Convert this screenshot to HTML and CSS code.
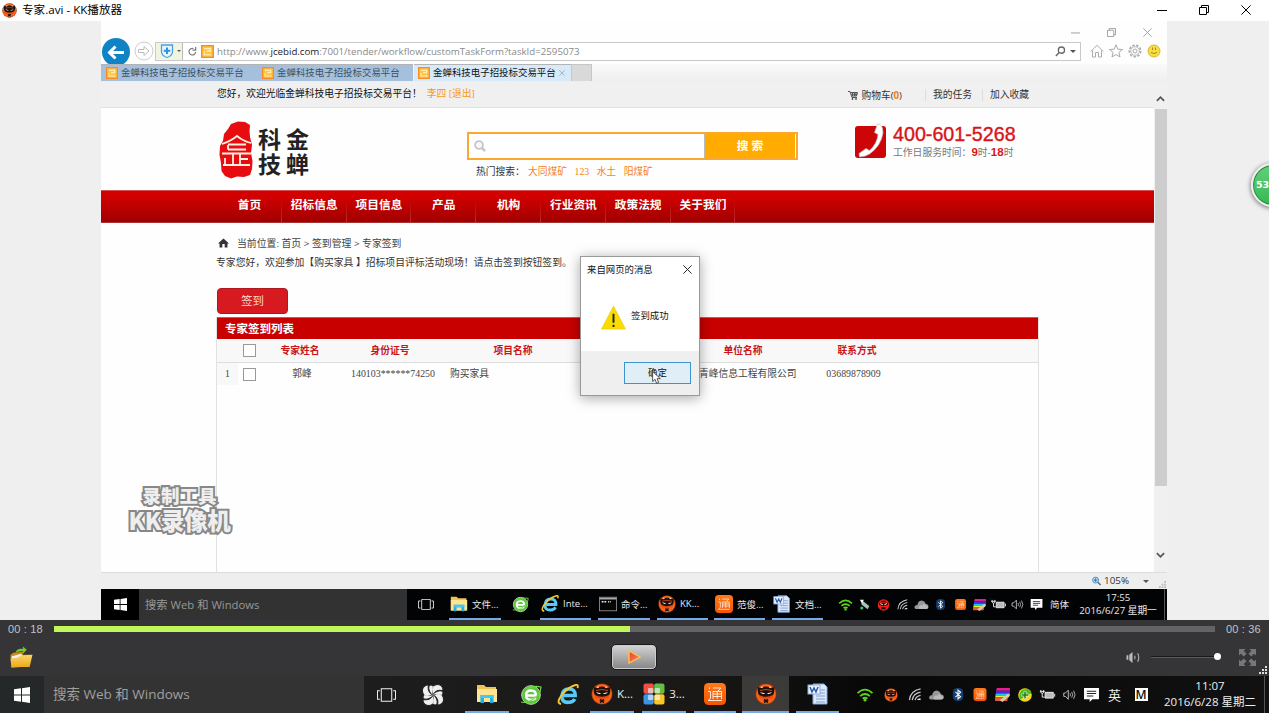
FILE: index.html
```html
<!DOCTYPE html>
<html>
<head>
<meta charset="utf-8">
<title>专家.avi - KK播放器</title>
<link rel="stylesheet" href="styles.css">
</head>
<body>
<svg class="defs" width="0" height="0" aria-hidden="true">
  <defs>
    <linearGradient id="gold" x1="0" y1="0" x2="0" y2="1"><stop offset="0" stop-color="#fbd66a"/><stop offset="1" stop-color="#eda91b"/></linearGradient>
    <radialGradient id="ember"><stop offset="0.55" stop-color="#e8470c"/><stop offset="0.85" stop-color="#ff6a1c"/><stop offset="1" stop-color="#8e2a08"/></radialGradient>
    <linearGradient id="orange" x1="0" y1="0" x2="0" y2="1"><stop offset="0" stop-color="#ff7a1a"/><stop offset="1" stop-color="#f85400"/></linearGradient>
    <linearGradient id="redplay" x1="0" y1="0" x2="1" y2="1"><stop offset="0" stop-color="#e8402c"/><stop offset="1" stop-color="#ff8a5c"/></linearGradient>
  </defs>
  <symbol id="kk" viewBox="0 0 22 22"><circle cx="11" cy="11" r="10.6" fill="url(#ember)"/><path d="M3 4L6 5Q11 2 16 5L19 4Q20 9 18 12Q11 15.500 4 12Q2 9 3 4Z" fill="#1c120e"/><path d="M5 9Q7.500 12 10 10.500ZM17 9Q14.500 12 12 10.500Z" fill="#fff"/><path d="M5 7.500Q11 5.500 17 7.500" stroke="#d84a14" fill="none" stroke-width=".9"/><path d="M6 4.500L8 4M16 4.500L14 4" stroke="#f4ded0" stroke-width="1.200"/><path d="M5 14.500Q11 17 17 14.500L15 18.500H7Z" fill="#f26322"/><path d="M9 16.500L13 19.500M13 16.500L9 19.500" stroke="#21100a" stroke-width="1.600"/></symbol>
  <symbol id="ninja" viewBox="0 0 22 22"><circle cx="11" cy="11" r="10.5" fill="#ee2218"/><path d="M3 7H19V11Q11 15 3 11ZM7 3h8v2H7zM7 15h8v4H7z" fill="#250706"/><path d="M5 8.500L9.500 10.500M17 8.500L12.500 10.500" stroke="#fff" stroke-width="1.800"/></symbol>
  <symbol id="win" viewBox="0 0 16 16"><path d="M0 2.300L7 1.300V7.500H0ZM8 1.200L16 0V7.500H8ZM0 8.500H7V14.700L0 13.700ZM8 8.500H16V16L8 14.800Z" fill="#fff"/></symbol>
  <symbol id="view" viewBox="0 0 20 14"><path d="M4.500.5H15.500V13.500H4.500ZM3 2.500H.5V11.500H3M17 2.500H19.500V11.500H17" fill="none" stroke="#eee" stroke-width="1.100"/></symbol>
  <symbol id="folder" viewBox="0 0 22 20"><path d="M1 1H8L10 3H20V18H1Z" fill="#f0c453"/><path d="M1 5H21V18H1Z" fill="#ffe491"/><path d="M4.500 19V11H17.500V19H14V14H8V19Z" fill="#23b0ea"/><path d="M4.500 11H17.500V14H4.500Z" fill="#45c6f5"/></symbol>
  <symbol id="e360" viewBox="0 0 22 22"><circle cx="11" cy="11" r="9" fill="#5cc63c"/><circle cx="11" cy="11" r="9.300" fill="none" stroke="#c9f2b8" stroke-width="1"/><path d="M6 11.500H16Q16 6.500 11 6.500T6 11.200T11 15.800Q14.500 15.800 15.600 13.800" fill="none" stroke="#fff" stroke-width="2.300"/><path d="M1 18Q12 20 20 8L21 3Q14 1 6 5" fill="none" stroke="#70d845" stroke-width="1.200"/></symbol>
  <symbol id="ie" viewBox="0 0 22 22"><path d="M5.500 11.500H18.200Q18.500 5 12 5T5 12T12 18.300Q16 18.300 17.800 15" fill="none" stroke="#58caf7" stroke-width="3.600"/><path d="M4 20Q-1 19 4 12Q10 4 17 1.500Q22-.5 20.500 4" fill="none" stroke="#f9c727" stroke-width="1.900"/></symbol>
  <symbol id="tong" viewBox="0 0 22 22"><rect width="22" height="22" rx="4.500" fill="url(#orange)"/><path d="M5.500 4.500V6M4 8.500H6.500V15Q5 17.500 4 17.500H18M9 5H17L14 8M9 8.500H17.500V16M9 8.500V16M13.200 8.500V16M9 11H17.500M9 13.500H17.500" stroke="#ffe8d8" stroke-width="1" fill="none"/></symbol>
  <symbol id="word" viewBox="0 0 22 22"><path d="M6 1H17L20 4V21H6Z" fill="#dce9fa" stroke="#86a8d6"/><path d="M9 7H18M9 10H18M9 13H18M9 16H18M9 19H18" stroke="#7f9fd0" stroke-width="1.100"/><rect x="1" y="2" width="12" height="9" fill="#eef4ff" stroke="#8badd9"/><path d="M3 4L5 9L7 5L9 9L11 4" fill="none" stroke="#2e5ca8" stroke-width="1.500"/></symbol>
  <symbol id="cmd" viewBox="0 0 20 16"><rect x=".5" y=".5" width="19" height="15" fill="#050505" stroke="#8b8b8b"/><path d="M1 2H19" stroke="#aaa" stroke-width="2"/><path d="M3 5.500H5M6 5.500H8M10 5.500H11M12 5.500H13" stroke="#eee" stroke-width="1.400"/></symbol>
  <symbol id="clover" viewBox="0 0 22 22"><g fill="#efefef" stroke="#252323" stroke-width="1.100"><path d="M11 11Q8 4 11 2Q15-1 19 1.500Q22 5 20.500 6.500Q14 5 11 11Z"/><path d="M11 11Q18 8 20 11Q23 15 20.500 19Q17 22 15.500 20.500Q17 14 11 11Z"/><path d="M11 11Q14 18 11 20Q7 23 3 20.500Q0 17 1.500 15.500Q8 17 11 11Z"/><path d="M11 11Q4 14 2 11Q-1 7 1.500 3Q5 0 6.500 1.500Q5 8 11 11Z"/><path d="M13 9Q18 6 20.500 8L20 11Q16 9 11 11ZM13 13Q16 18 14 20.500L11 20Q13 16 11 11ZM9 13Q4 16 1.500 14L2 11Q6 13 11 11ZM9 9Q6 4 8 1.500L11 2Q9 6 11 11Z" stroke="none"/></g></symbol>
  <symbol id="squares" viewBox="0 0 22 22"><rect x=".5" y=".5" width="10.300" height="10.300" rx="2" fill="#ef4f43"/><rect x="11.200" y=".5" width="10.300" height="10.300" rx="2" fill="#64bd45"/><rect x=".5" y="11.200" width="10.300" height="10.300" rx="2" fill="#3e93e6"/><rect x="11.200" y="11.200" width="10.300" height="10.300" rx="2" fill="#fbc52a"/><g fill="#fff" opacity=".6"><rect x="5" y="5" width="5.300" height="5.300" rx="1"/><rect x="11.700" y="5" width="5.300" height="5.300" rx="1"/><rect x="5" y="11.700" width="5.300" height="5.300" rx="1"/><rect x="11.700" y="11.700" width="5.300" height="5.300" rx="1"/></g></symbol>
  <symbol id="wifi" viewBox="0 0 18 15"><g fill="none" stroke="#5fd01c" stroke-width="2"><path d="M1 5.500Q9-2 17 5.500M3.800 8.700Q9 4 14.200 8.700M6.500 11.500Q9 9.300 11.500 11.500"/></g><circle cx="9" cy="13" r="1.500" fill="#5fd01c"/></symbol>
  <symbol id="plug" viewBox="0 0 14 14"><path d="M4 2L13 9L11 13L3 7Z" fill="#a8c4b8"/><path d="M1 1L6 1L4 6Z" fill="#fff"/><circle cx="3.500" cy="11.500" r="2" fill="#4bbd79"/></symbol>
  <symbol id="signal" viewBox="0 0 14 14"><path d="M1 13Q2 3 13 1M4 13Q5 6 13 4.500M7 13Q8 9 13 8" fill="none" stroke="#c7c7c7" stroke-width="1.300"/><path d="M9 13Q10 11 13 11V13Z" fill="#eee"/></symbol>
  <symbol id="cloud" viewBox="0 0 16 12"><path d="M3 11Q0 11 .3 8.500Q1 6 3.500 6.500Q4 2 8 1.500Q12 2 12.500 5.500Q16 6 15.500 9Q15 11 12 11Z" fill="#989898"/><path d="M6 11Q4 10 5.500 8Q7 6 9 7Q11 4 13 7Q16 8 15 10Q14 11 12 11Z" fill="#bababa"/></symbol>
  <symbol id="bt" viewBox="0 0 12 15"><rect width="12" height="15" rx="5" fill="#123f71"/><path d="M3 4.500L9 10L6 12.500V2.500L9 5L3 10.500" fill="none" stroke="#fff" stroke-width="1.200"/></symbol>
  <symbol id="rainbow" viewBox="0 0 16 15"><path d="M2 0H16V3H1Z" fill="#e41e92"/><path d="M1 3H16V6H1Z" fill="#432cd5"/><path d="M1 6H16V8H0Z" fill="#1fc2ea"/><path d="M1 8H15V10H0Z" fill="#edee2b"/><path d="M0 10H14L13 14H0Z" fill="#e35b3c"/><path d="M5 13L14 6L16 8L8 15Z" fill="#d9c9ad"/></symbol>
  <symbol id="plus" viewBox="0 0 16 16"><circle cx="8" cy="8" r="7.800" fill="#f7d614"/><path d="M2 13Q0 6 5 2L11 1Q15 3 15 6Z" fill="#4aba22"/><path d="M8 3.500V12.500M3.500 8H12.500" stroke="#fff" stroke-width="3"/><path d="M8 4V12M4 8H12" stroke="#237917" stroke-width="1.800"/></symbol>
  <symbol id="battery" viewBox="0 0 16 12"><path d="M5.500 3.500H14V9.500H5.500Z" fill="#bbb" stroke="#eee"/><path d="M15.500 5V8M1 1V3Q1 4.500 2.500 4.500T4 3V1M0 2.500H5M2.500 4.500V8.500H5" stroke="#eee" fill="none"/></symbol>
  <symbol id="sound" viewBox="0 0 16 14"><path d="M1 5H3L6.500 1.500V12.500L3 9H1Z" fill="none" stroke="#ddd"/><path d="M8.500 5Q10 7 8.500 9M10.700 3.500Q13 7 10.700 10.500M13 2Q16.500 7 13 12" fill="none" stroke="#ccc"/></symbol>
  <symbol id="msg" viewBox="0 0 16 15"><path d="M0 0H16V12H9L6 15V12H0Z" fill="#fff"/><path d="M3 3.500H13M3 6H13M3 8.500H10" stroke="#222" stroke-width="1.100"/></symbol>
  <symbol id="fav" viewBox="0 0 14 14"><rect x=".75" y=".75" width="12.500" height="12.500" fill="#ffc445" stroke="#f78a2b" stroke-width="1.500"/><path d="M3.500 4H10V6.500H6M3.500 7V10.500H11" fill="none" stroke="#fff0b0" stroke-width="1.300"/></symbol>
  <symbol id="min" viewBox="0 0 10 10"><path d="M0 5.500H10" stroke="currentColor"/></symbol>
  <symbol id="max" viewBox="0 0 10 10"><path d="M.5 2.500H7.500V9.500H.5ZM2.500 2.500V.5H9.500V7.500H7.500" stroke="currentColor" fill="none"/></symbol>
  <symbol id="x" viewBox="0 0 10 10"><path d="M.4.4L9.600 9.600M9.600.4L.4 9.600" stroke="currentColor" fill="none"/></symbol>
</svg>

<header class="titlebar">
  <svg class="app-icon"><use href="#kk"/></svg>
  <span class="app-title">专家.avi - KK播放器</span>
  <div class="win-ctl"><svg><use href="#min"/></svg><svg><use href="#max"/></svg><svg><use href="#x"/></svg></div>
</header>

<main class="stage">
  <section class="video">
    <div class="ie-ctl"><svg><use href="#min"/></svg><svg><use href="#max"/></svg><svg><use href="#x"/></svg></div>
    <div class="address-row">
      <svg class="back" viewBox="0 0 28 26"><circle cx="14" cy="14" r="14" fill="#0f83c4"/><path d="M22 14.500H8M13.500 8.500L7.500 14.500L13.500 20.500" stroke="#fff" stroke-width="3" fill="none"/></svg>
      <svg class="forward" viewBox="0 0 20 20"><circle cx="10" cy="10" r="9" fill="#fff" stroke="#ccc"/><path d="M4.500 8.500H10V5.500L15 10L10 14.500V11.500H4.500Z" fill="none" stroke="#bbb"/></svg>
      <div class="address">
        <div class="shield"><svg viewBox="0 0 14 14"><path d="M1.500 1H12.500V8Q12 12 7 13.500Q2 12 1.500 8Z" fill="#e2f6ff" stroke="#4c9ee0" stroke-width="1.300"/><path d="M7 3.500V10M3.800 6.700H10.200" stroke="#3390dd" stroke-width="2"/></svg><i class="caret"></i></div>
        <svg class="reload" viewBox="0 0 10 10"><path d="M8.500 5.500A3.700 3.700 0 1 1 6 1.700M5 3.500H8.500V0" fill="none" stroke="#777" stroke-width="1.300"/></svg>
        <svg class="fav"><use href="#fav"/></svg>
        <span class="url">http://www.<b>jcebid.com</b>:7001/tender/workflow/customTaskForm?taskId=2595073</span>
        <svg class="lens" viewBox="0 0 12 12"><circle cx="7" cy="4.500" r="3.400" fill="none" stroke="#666" stroke-width="1.400"/><path d="M4.500 7L1 10.800" stroke="#666" stroke-width="1.600"/></svg><i class="caret"></i>
      </div>
      <div class="ie-tools">
        <svg viewBox="0 0 14 14"><path d="M.8 7.500L7 1.200L13.200 7.500M2.500 6.500V13H5.500V8.500H8.500V13H11.500V6.500" fill="none" stroke="#aaa"/></svg>
        <svg viewBox="0 0 14 14"><path d="M7 .8L8.800 5.200L13.500 5.500L9.900 8.500L11 13L7 10.500L3 13L4.100 8.500L.5 5.500L5.200 5.200Z" fill="none" stroke="#aaa"/></svg>
        <svg viewBox="0 0 14 14"><circle cx="7" cy="7" r="5.700" fill="none" stroke="#aaa" stroke-width="1.600" stroke-dasharray="2.500 1.400"/><circle cx="7" cy="7" r="4.300" fill="none" stroke="#bbb"/><circle cx="7" cy="7" r="2" fill="none" stroke="#aaa"/></svg>
        <svg viewBox="0 0 14 14"><circle cx="7" cy="7" r="6" fill="#f7dc42" stroke="#d8b92f"/><path d="M5.500 3.500V6M8.500 3.500V6M4 8.500Q7 10.500 10 8.500" stroke="#a78a22" fill="none"/></svg>
      </div>
    </div>
    <nav class="tabs">
      <div class="tab"><svg><use href="#fav"/></svg><span>金蝉科技电子招投标交易平台</span></div>
      <div class="tab"><svg><use href="#fav"/></svg><span>金蝉科技电子招投标交易平台</span></div>
      <div class="tab active"><svg><use href="#fav"/></svg><span>金蝉科技电子招投标交易平台</span><svg class="tab-x"><use href="#x"/></svg></div>
      <div class="new-tab"></div>
    </nav>
    <div class="viewport">
      <div class="page">
        <div class="topline">
          <span>您好，欢迎光临金蝉科技电子招投标交易平台！</span><span class="user">李四 [退出]</span>
          <div class="links"><span><svg class="cart" viewBox="0 0 10 9"><path d="M0 .5H2L4 6.500H9M2.500 1.500H9.500L8.500 5H4M3.300 3.300H9M4.500 1V5M6.500 1V5M8 1V5" fill="none" stroke="#555"/><circle cx="4.500" cy="8" r=".8"/><circle cx="8" cy="8" r=".8"/></svg>购物车(<b>0</b>)</span><span>我的任务</span><span>加入收藏</span></div>
        </div>
        <div class="brand-row">
          <svg class="stamp" viewBox="0 0 34 58"><path d="M12 3L19 .5L26 1L31 4L30.500 10L31 16L33 24L32 32L33.500 40L33 48L31 54L25 56L18 55.500L12 57.500L6 55L2.500 50L2 42L.5 34L1 25L4 20L5 13L9 8Z" fill="#e60c10"/><path d="M3 23Q12 20 18 15Q24 20 32 22M9 23.500H27M9 28.500H27M9 28.500V24M3 32.500H32M14 32.500V44M21 32.500V44M21 38H29M6 37V44M4 44H31" fill="none" stroke="#fff0e4" stroke-width="1.800"/></svg>
          <div class="logo-text"><span>科</span><span>金</span><span>技</span><span>蝉</span></div>
          <div class="search">
            <div class="search-box"><svg viewBox="0 0 12 12"><circle cx="5" cy="5" r="3.900" fill="#f7f7f7" stroke="#c6c6c6" stroke-width="1.800"/><path d="M8 8L11 11" stroke="#c6c6c6" stroke-width="2.500"/></svg><div class="search-btn">搜 索</div></div>
            <div class="hot"><span>热门搜索：</span><a>大同煤矿</a><a class="digits">123</a><a>水土</a><a>阳煤矿</a></div>
          </div>
          <svg class="phone" viewBox="0 0 33 36"><rect x="1" y="3" width="31" height="32" rx="3" fill="#ce0508"/><path d="M23.500 1Q29 .5 29 10Q27 23 15.500 31Q11 34 5.500 34L5 30.500L12 25.500L15.500 27.500Q23 21 24 11.500L20.500 9.500Z" fill="#fff" stroke="#bbb" stroke-width=".7"/></svg>
          <div class="hotline"><div class="tel">400-601-5268</div><div class="hours">工作日服务时间：<b>9</b>时-<b>18</b>时</div></div>
        </div>
        <nav class="menu"><span>首页</span><span>招标信息</span><span>项目信息</span><span>产品</span><span>机构</span><span>行业资讯</span><span>政策法规</span><span>关于我们</span></nav>
        <div class="content">
          <div class="crumb"><svg viewBox="0 0 12 10"><path d="M0 5.500L6 0L12 5.500H10.300V10H7.300V6H4.700V10H1.700V5.500Z" fill="#333"/></svg><span>当前位置: 首页 &gt; 签到管理 &gt; 专家签到</span></div>
          <p class="intro">专家您好，欢迎参加【购买家具 】招标项目评标活动现场！请点击签到按钮签到。</p>
          <div class="sign-btn">签到</div>
          <div class="list">
            <div class="list-title">专家签到列表</div>
            <div class="row head"><span class="num"></span><i class="box"></i><span>专家姓名</span><span>身份证号</span><span>项目名称</span><span></span><span>单位名称</span><span>联系方式</span></div>
            <div class="row"><span class="num">1</span><i class="box"></i><span class="name">郭峰</span><span class="code">140103******74250</span><span class="left">购买家具</span><span></span><span class="company">青峰信息工程有限公司</span><span class="tel-no">03689878909</span></div>
          </div>
        </div>
      </div>
      <div class="scroll"><svg viewBox="0 0 10 6"><path d="M1 5L5 1L9 5" fill="none" stroke="#555" stroke-width="2"/></svg><div class="thumb"></div><svg viewBox="0 0 10 6"><path d="M1 1L5 5L9 1" fill="none" stroke="#555" stroke-width="2"/></svg></div>
    </div>
    <div class="status"><svg class="zoom" viewBox="0 0 10 10"><circle cx="4" cy="4" r="3.300" fill="#bfe2f5" stroke="#4386bb"/><path d="M6.500 6.500L9.500 9.500" stroke="#666" stroke-width="1.600"/><path d="M4 2V6M2 4H6" stroke="#2069aa"/></svg><span>105%</span><i class="caret"></i><svg class="grip" viewBox="0 0 8 8"><path d="M6 0H8V2H6ZM3 3H5V5H3ZM6 3H8V5H6ZM0 6H2V8H0ZM3 6H5V8H3ZM6 6H8V8H6Z" fill="#bbb"/></svg></div>
    <div class="mini-bar">
      <div class="start"><svg><use href="#win"/></svg></div>
      <div class="find">搜索 Web 和 Windows</div>
      <div class="m-view"><svg><use href="#view"/></svg></div>
      <div class="task first"><svg><use href="#folder"/></svg><span>文件...</span></div>
      <div class="m-e"><svg><use href="#e360"/></svg></div>
      <div class="task w51 g0"><svg><use href="#ie"/></svg><span>Inte...</span></div>
      <div class="task"><svg><use href="#cmd"/></svg><span>命令...</span></div>
      <div class="task w51"><svg><use href="#kk"/></svg><span>KK...</span></div>
      <div class="task w51 g6"><svg><use href="#tong"/></svg><span>范俊...</span></div>
      <div class="task w51"><svg><use href="#word"/></svg><span>文档...</span></div>
      <div class="m-tray"><svg class="big"><use href="#wifi"/></svg><svg><use href="#plug"/></svg><svg class="big"><use href="#ninja"/></svg><svg><use href="#signal"/></svg><svg><use href="#cloud"/></svg><svg><use href="#bt"/></svg><svg><use href="#tong"/></svg><svg class="big"><use href="#rainbow"/></svg><svg><use href="#battery"/></svg><svg><use href="#sound"/></svg><svg><use href="#msg"/></svg></div>
      <span class="m-lang">简体</span>
      <div class="m-clock"><span>17:55</span><span>2016/6/27 星期一</span></div>
    </div>

    <div class="watermark"><span>录制工具</span><span class="wm-big">KK录像机</span></div>

    <div class="dialog">
      <div class="dlg-head"><span>来自网页的消息</span><svg><use href="#x"/></svg></div>
      <div class="dlg-body"><svg viewBox="0 0 26 25"><path d="M13 .5L25.500 24.500H.5Z" fill="#fbdc00" stroke="#e8c613" stroke-width=".6"/><path d="M13 8.500V18M13 20V22.500" stroke="#222" stroke-width="2"/></svg><span>签到成功</span></div>
      <div class="dlg-foot"><div class="ok">确定</div></div>
      <svg class="cursor" viewBox="0 0 10 15"><path d="M.7.700V12L3.400 9.500L5.200 14L7.400 13L5.600 8.800H9.300Z" fill="#fff" stroke="#333" stroke-width=".9"/></svg>
    </div>
  </section>
  <div class="badge">53</div>
</main>

<section class="player">
  <div class="seek"><span>00 : 18</span><div class="track"><div class="done"></div></div><span>00 : 36</span></div>
  <div class="controls">
    <svg class="open" viewBox="0 0 24 24"><path d="M1 9L4 7L14 6L14 9H22L20 21L2 23Z" fill="#c98d17"/><path d="M2 11L12 8L16 13L4 20Z" fill="#edf4fb"/><path d="M1 13L9 12L11 10L24 9L21 22H2Z" fill="url(#gold)"/><path d="M6 7Q8 2 14 3V.5L18 4L14 8V5.500Q9 5 6 7Z" fill="#70cf20"/></svg>
    <div class="play"><svg viewBox="0 0 18 18"><path d="M4 3L15 9L4 15Z" fill="url(#redplay)" stroke="#ffc052" stroke-width="1.400"/></svg></div>
    <div class="vol"><svg viewBox="0 0 16 14"><path d="M1 4.500H3V9.500H1ZM4 4L7.500 1V13L4 10Z" fill="#bbb"/><path d="M10 5V9M13 2.500Q15.500 7 13 11.500" stroke="#aaa" fill="none" stroke-width="1.300"/></svg><div class="vol-line"><i></i></div></div>
    <svg class="full" viewBox="0 0 18 18"><path d="M0 0H7L5 2L8 5L5 8L2 5L0 7ZM18 0V7L16 5L13 8L10 5L13 2L11 0ZM0 18V11L2 13L5 10L8 13L5 16L7 18ZM18 18H11L13 16L10 13L13 10L16 13L18 11Z" fill="#77777a"/></svg>
    <svg class="resize" viewBox="0 0 8 8"><path d="M6 0H8V2H6ZM3 3H5V5H3ZM6 3H8V5H6ZM0 6H2V8H0ZM3 6H5V8H3ZM6 6H8V8H6Z" fill="#ddd"/></svg>
  </div>
</section>

<footer class="taskbar">
  <div class="start"><svg><use href="#win"/></svg></div>
  <div class="find">搜索 Web 和 Windows</div>
  <div class="cell c45"><svg class="view"><use href="#view"/></svg></div>
  <div class="cell c48"><svg><use href="#clover"/></svg></div>
  <div class="app a44"><svg><use href="#folder"/></svg></div>
  <div class="cell c44"><svg><use href="#e360"/></svg></div>
  <div class="cell c30"><svg><use href="#ie"/></svg></div>
  <div class="app a44 k"><svg><use href="#kk"/></svg><span>K...</span></div>
  <div class="app a44"><svg><use href="#squares"/></svg><span>3...</span></div>
  <div class="app a42"><svg><use href="#tong"/></svg></div>
  <div class="app current"><svg><use href="#kk"/></svg></div>
  <div class="app a43"><svg><use href="#word"/></svg></div>
  <div class="tray">
    <svg class="t26"><use href="#wifi"/></svg><svg class="t26"><use href="#kk"/></svg><svg class="small"><use href="#signal"/></svg><svg class="t21 small"><use href="#cloud"/></svg><svg class="small"><use href="#bt"/></svg><svg class="small"><use href="#tong"/></svg><svg class="t23"><use href="#rainbow"/></svg><svg><use href="#plus"/></svg><svg class="t23 small"><use href="#battery"/></svg><svg class="t21 small"><use href="#sound"/></svg><svg class="t23"><use href="#msg"/></svg>
    <span class="ime">英</span><span class="mode"><b>M</b></span>
  </div>
  <div class="clock"><span>11:07</span><span>2016/6/28 星期二</span></div>
</footer>
</body>
</html>
```
FILE: styles.css
```css
* { box-sizing: border-box; }
body { margin: 0; width: 1269px; height: 713px; overflow: hidden; background: #efefef; font-family: "Open Sans", "Noto Sans CJK SC", sans-serif; color: #333; white-space: nowrap; }
svg { display: block; flex: none; overflow: visible; }
.defs { position: absolute; }
.titlebar { height: 21px; background: #fff; display: flex; align-items: center; padding-left: 2px; color: #000; }
.app-icon { width: 15px; height: 15px; }
.app-title { font-size: 11.6px; margin-left: 5px; line-height: 20px; margin-top: -2px; }
.win-ctl { margin-left: auto; display: flex; gap: 32px; padding: 0 18px 2px 0; }
.win-ctl svg { width: 10px; height: 10px; }

.stage { height: 599px; padding-left: 101px; position: relative; overflow: hidden; background: #efefef; }
.video { width: 1066px; height: 599px; background: #fefefe; position: relative; display: flex; flex-direction: column; }
.ie-ctl { height: 17px; flex: none; display: flex; justify-content: flex-end; gap: 27px; padding: 7px 15px 0 0; color: #999; }
.ie-ctl svg { width: 9px; height: 9px; }
.address-row { height: 26px; flex: none; display: flex; align-items: center; padding-left: 1px; overflow: hidden; }
.back { width: 28px; height: 26px; }
.forward { width: 20px; height: 20px; margin-left: 4px; }
.address { width: 926px; height: 19px; margin-left: 1px; border: 1px solid #c9c9c9; display: flex; align-items: center; background: #fff; }
.shield { width: 27px; height: 17px; border-right: 1px solid #bbb; background: #f0f5df; display: flex; align-items: center; gap: 3px; padding-left: 4px; }
.shield svg { width: 14px; height: 14px; }
.caret { width: 0; height: 0; border: 3px solid transparent; border-top: 3px solid #555; border-bottom: 0; flex: none; }
.shield .caret { border-width: 2px 2px 0; }
.reload { width: 9px; height: 9px; margin-left: 5px; }
.fav { width: 13px; height: 13px; margin-left: 4px; }
.url { font-size: 9.7px; color: #8a8a8a; margin-left: 3px; line-height: 16px; margin-top: 1px; }
.url b { font-weight: 400; color: #222; }
.lens { width: 11px; height: 11px; margin-left: auto; }
.lens + .caret { margin: 0 4px 0 4px; }
.ie-tools { display: flex; gap: 5px; margin-left: 9px; }
.ie-tools svg { width: 14px; height: 14px; }
.tabs { height: 18px; flex: none; display: flex; background: linear-gradient(#fafafa, #eeeeef); font-size: 9.45px; color: #3e5264; }
.tab { width: 156px; height: 17px; background: #a5c0dc; display: flex; align-items: center; gap: 3px; padding-left: 5px; border-top: 1px solid #b4b4b4; }
.tab svg { width: 12px; height: 12px; }
.tab span { line-height: 14px; }
.tab.active { width: 157px; background: #d7eafa; color: #111; margin-left: 1px; padding-left: 4px; }
.tab svg.tab-x { width: 6px; height: 6px; color: #8495a3; }
.new-tab { width: 21px; height: 17px; background: #d9d9d9; border: 1px solid #c6c6c6; border-bottom: 0; }

.viewport { height: 490px; flex: none; display: flex; }
.page { width: 1053px; display: flex; flex-direction: column; font-size: 9.75px; }
.topline { height: 26px; flex: none; background: #f0f0f1; border-bottom: 1px solid #e2e2e2; display: flex; padding-left: 116px; line-height: 23px; color: #111; }
.user { color: #f79a1a; margin-left: 5px; }
.links { display: flex; margin-left: auto; padding: 2px 125px 0 0; color: #333; }
.links span { display: flex; align-items: center; line-height: 22px; }
.links span + span { margin-left: 23px; border-left: 1px solid #ddd; padding-left: 7px; height: 12px; margin-top: 5px; }
.links span:last-child { margin-left: 10px; }
.links b { color: #f47a13; }
.cart { width: 10px; height: 9px; margin-right: 3px; }
.brand-row { height: 82px; flex: none; display: flex; padding-left: 118px; }
.stamp { width: 34px; height: 58px; margin-top: 13px; }
.logo-text { display: grid; grid-template-columns: 28px 28px; grid-template-rows: 25px 24px; margin: 18px 0 0 5px; width: 56px; font: 700 23px/24px "Noto Sans CJK SC", sans-serif; color: #222; }
.search { margin: 24px 0 0 153px; width: 331px; }
.search-box { height: 28px; border: 2px solid #faa831; display: flex; align-items: center; padding: 0 1px 0 5px; background: #fff; }
.search-box svg { width: 12px; height: 12px; }
.search-btn { margin-left: auto; width: 91px; height: 24px; background: #ffab00; color: #fff; font-weight: 700; font-size: 11.7px; line-height: 23px; text-align: center; border-left: 1px solid #bbb; }
.hot { display: flex; padding-left: 9px; line-height: 23px; }
.hot span { width: 52px; }
.hot a { color: #f5821f; margin-right: 7.5px; }
.hot .digits { font-family: "Liberation Serif", serif; }
.phone { width: 33px; height: 36px; margin: 15px 0 0 56px; }
.hotline { margin: 15px 0 0 6px; }
.tel { font: 19.7px/22px "Liberation Sans", sans-serif; color: #d9141a; -webkit-text-stroke: .4px #d9141a; }
.hours { font-size: 9.8px; line-height: 14px; color: #777; font-family: "Liberation Sans", "Noto Sans CJK SC", sans-serif; }
.hours b { color: #d9141a; font-size: 11.5px; }
.menu { height: 33px; flex: none; background: linear-gradient(#d30000 15%, #a00000); border-top: 1px solid #d65050; border-bottom: 1px solid #a33; display: flex; padding-left: 116px; color: #fff; font-weight: 700; font-size: 11.7px; line-height: 26px; }
.menu span { width: 64.8px; text-align: center; padding-left: 1px; border-right: 1px solid; border-image: linear-gradient(transparent 30%, #c23030) 1; }
.content { flex: 1; padding-left: 115px; }
.crumb { display: flex; align-items: center; gap: 8px; padding: 10px 0 0 2px; line-height: 20px; height: 30px; color: #444; font-size: 9.85px; }
.crumb svg { width: 11px; height: 10px; }
.intro { margin: 0; line-height: 20px; height: 35px; color: #333; font-size: 9.82px; }
.sign-btn { width: 71px; height: 26px; margin-left: 1px; border: 1px solid #b01820; border-radius: 4px; background: #d71a20; color: #ffd9cd; font-size: 11.5px; line-height: 24px; text-align: center; }
.list { width: 823px; height: 255px; margin-top: 3px; border: 1px solid #e2e2e2; border-width: 0 1px; }
.list-title { height: 22px; background: #c80000; color: #fff; font-weight: 700; font-size: 11.5px; line-height: 21px; padding-left: 8px; border-top: 1px solid #a66; }
.row { display: grid; grid-template-columns: 21px 24px 76px 104px 142px 88px 142px 86px; height: 22px; align-items: center; text-align: center; line-height: 20px; color: #444; }
.row.head { height: 24px; background: #f8f8f8; border-bottom: 1px solid #ddd; color: #c8141a; font-weight: 700; }
.num { font-family: "Liberation Serif", serif; height: 22px; background: #f8f8f8; line-height: 22px; }
.box { width: 13px; height: 13px; border: 1px solid #999; background: #fff; margin-left: 5px; }
.name { padding-left: 4px; }
.code, .tel-no { font-family: "Liberation Serif", serif; font-size: 9.9px; }
.code { padding-left: 6px; }
.tel-no { padding-right: 7px; }
.left { text-align: left; padding-left: 8px; }
.company { text-align: left; padding-left: 27px; }
.scroll { width: 13px; display: flex; flex-direction: column; align-items: center; background: #f0f0f0; padding: 14px 0; }
.scroll svg { width: 9px; height: 6px; }
.thumb { width: 12px; height: 377px; margin: 7px 0 66px; background: #cdcdcd; }
.status { height: 17px; flex: none; background: #eee; border-top: 1px solid #ddd; display: flex; align-items: center; font-size: 9.8px; color: #333; justify-content: flex-end; }
.zoom { width: 9px; height: 10px; }
.status span { margin: 0 14px 0 3px; line-height: 14px; }
.grip { width: 7px; height: 7px; margin: 6px 1px 0 10px; }

.mini-bar { height: 31px; flex: none; display: flex; background: #020305; color: #e8e8e8; font-size: 9.5px; }
.mini-bar .start { width: 38px; display: flex; align-items: center; justify-content: center; background: #000; }
.mini-bar .start svg { width: 13px; height: 13px; }
.mini-bar .find { width: 268px; background: #323232; color: #989898; padding-left: 6px; font-size: 11.3px; line-height: 31px; }
.m-view, .m-e { display: flex; align-items: center; justify-content: center; width: 38px; }
.m-view svg { width: 16px; height: 11px; }
.m-e { width: 39px; }
.m-e svg { width: 17px; height: 17px; }
.task { width: 52px; margin-left: 7px; border-bottom: 2px solid #76a9e6; display: flex; align-items: center; gap: 4px; padding-left: 1px; }
.task.first { margin-left: 4px; }
.task.w51 { width: 51px; }
.task.g0 { margin-left: 0; }
.task.g6 { margin-left: 6px; }
.task svg { width: 18px; height: 18px; }
.m-tray { display: flex; align-items: center; margin-left: 13px; }
.m-tray svg { width: 19.1px; height: 11px; }
.m-tray svg.big { height: 12px; }
.m-lang { line-height: 32px; margin-left: 4px; width: 19px; }
.m-clock { width: 93px; margin-left: 3px; display: flex; flex-direction: column; align-items: center; line-height: 13px; padding-top: 2px; font-size: 9.7px; border-right: 1px solid #555; }

.watermark { position: absolute; left: 26px; top: 463px; width: 105px; display: flex; flex-direction: column; align-items: center; font: 900 18.5px/23px "Noto Sans CJK SC", sans-serif; color: #eee; -webkit-text-stroke: 4px #888; paint-order: stroke fill; }
.wm-big { font-size: 23.5px; line-height: 27px; letter-spacing: -.4px; }
.dialog { position: absolute; left: 479px; top: 235px; width: 120px; height: 140px; background: #fff; border: 1px solid #999; box-shadow: 0 2px 12px rgba(0,0,0,.35); font-size: 9.4px; color: #111; display: flex; flex-direction: column; }
.dlg-head { height: 24px; padding: 0 7px 0 6px; display: flex; align-items: center; justify-content: space-between; }
.dlg-head svg { width: 9px; height: 9px; }
.dlg-body { flex: 1; display: flex; align-items: center; gap: 5px; padding: 0 0 2px 20px; }
.dlg-body svg { width: 25px; height: 25px; margin-top: 5px; }
.dlg-foot { height: 44px; background: #efefef; display: flex; justify-content: flex-end; padding: 11px 8px; }
.ok { width: 67px; height: 22px; border: 1px solid #3c93cf; background: #e0eef8; line-height: 20px; text-align: center; }
.cursor { position: absolute; left: 71px; top: 113px; width: 9px; height: 15px; }
.badge { position: absolute; left: 1251px; top: 142px; width: 44px; height: 44px; border-radius: 50%; background: linear-gradient(#63cf78, #36b853); border: 2px solid #eee; box-shadow: 0 1px 5px rgba(0,0,0,.6), inset 0 0 0 1px #27894a; color: #fff; font: 700 9.5px/39px "DejaVu Sans", sans-serif; padding-left: 3px; }

.player { height: 56px; background: #353538; display: flex; flex-direction: column; }
.seek { display: flex; align-items: center; height: 18px; padding-left: 8px; font: 11px/18px "Liberation Sans", sans-serif; color: #c3c3c3; letter-spacing: .15px; }
.seek span { width: 46px; flex: none; }
.track { width: 1161px; flex: none; height: 6px; background: #636363; margin-right: 11px; }
.done { width: 576px; height: 6px; background: #c0f65a; }
.controls { flex: 1; display: flex; align-items: center; padding-left: 9px; }
.open { width: 24px; height: 23px; }
.play { width: 46px; height: 26px; margin-left: 578px; border: 1px solid #1b1b1b; border-radius: 5px; background: linear-gradient(#d5d5d5, #858585); display: flex; align-items: center; justify-content: center; box-shadow: inset 0 0 0 1px #ccc; }
.play svg { width: 18px; height: 18px; }
.vol { display: flex; align-items: center; margin-left: 468px; gap: 10px; }
.vol svg { width: 16px; height: 13px; }
.vol-line { width: 70px; height: 2px; background: #19191b; border-bottom: 1px solid #5a5a5d; display: flex; justify-content: flex-end; align-items: center; }
.vol-line i { width: 7px; height: 7px; border-radius: 50%; background: #fff; flex: none; }
.full { width: 17px; height: 17px; margin-left: 18px; }
.resize { width: 8px; height: 8px; margin: 25px 0 0 3px; }

.taskbar { height: 37px; display: flex; background: linear-gradient(90deg, #232324 0, #191817 55%, #080808 68%, #111 100%); color: #eee; }
.taskbar .start { width: 44px; display: flex; align-items: center; justify-content: center; background: #252828; }
.taskbar .start svg { width: 16px; height: 16px; }
.taskbar .find { width: 320px; background: #333; color: #a0a0a0; padding-left: 9px; font-size: 13.5px; line-height: 37px; }
.cell, .app { display: flex; align-items: center; justify-content: center; }
.cell svg, .app svg { width: 22px; height: 22px; }
.cell svg.view { width: 19px; height: 14px; }
.c45 { width: 45px; }
.c48 { width: 48px; }
.c44 { width: 44px; }
.c30 { width: 30px; }
.app { border-bottom: 2px solid #76a9e6; font-size: 11.5px; gap: 4px; margin-left: 8px; }
.app.k { margin-left: 7px; }
.a44 { width: 44px; }
.a42 { width: 42px; }
.a43 { width: 43px; margin-left: 7px; }
.app.current { width: 47px; margin-left: 6px; background: #3d3b39; }
.tray { display: flex; align-items: center; margin-left: 13px; }
.tray svg { width: 22px; height: 14px; }
.tray svg.small { height: 13px; }
.tray svg.t26 { width: 26px; }
.tray svg.t21 { width: 21px; }
.tray svg.t21.small, .tray svg.t23.small { height: 11.5px; }
.tray svg.t23 { width: 23px; }
.ime { width: 23px; font-size: 13px; text-align: center; line-height: 30px; }
.mode { width: 30px; display: flex; justify-content: center; }
.mode b { width: 13px; height: 13px; background: #fff; color: #111; font-weight: 600; font-size: 12px; line-height: 13px; text-align: center; }
.clock { width: 109px; display: flex; flex-direction: column; align-items: center; font-size: 11.5px; line-height: 16px; padding-top: 2px; border-right: 1px solid #555; }
```
